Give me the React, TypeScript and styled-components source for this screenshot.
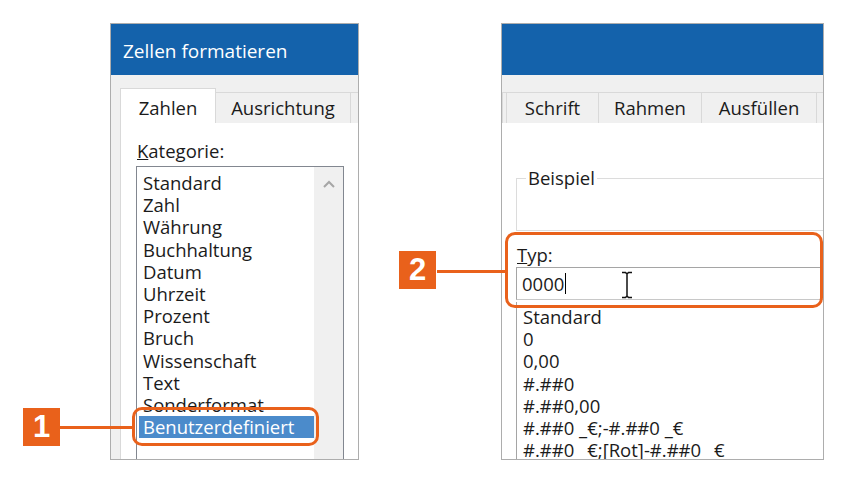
import styled, { createGlobalStyle } from "styled-components";

const GlobalStyle = createGlobalStyle`
  html, body {
    margin: 0;
    padding: 0;
    background: #ffffff;
  }
  body {
    font-family: "Open Sans", "Noto Sans", sans-serif;
    color: #1b1b1b;
  }
  * {
    box-sizing: border-box;
  }
`;

const ORANGE = "#e9611b";
const BLUE = "#1462ab";
const TEXT_SIZE = "18.5px";

const Page = styled.div`
    position: relative;
    width: 850px;
    height: 483px;
    display: flex;
    align-items: flex-start;
    gap: 142px;
    padding: 23px 0 0 110px;
    overflow: hidden;
`;

const Panel = styled.div<{ $w: number }>`
    width: ${(p) => p.$w}px;
    height: 437px;
    border: 1px solid #adadad;
    background: #f0f0f0;
    display: flex;
    flex-direction: column;
    overflow: hidden;
`;

const TitleBar = styled.div`
    height: 51px;
    flex: none;
    background: ${BLUE};
    color: #ffffff;
    font-size: 19px;
    display: flex;
    align-items: center;
    padding: 2px 0 0 12px;
`;

const TabRow = styled.div<{ $top: number; $left: number }>`
    height: 48px;
    flex: none;
    display: flex;
    align-items: flex-end;
    padding: ${(p) => p.$top}px 0 0 ${(p) => p.$left}px;
    white-space: nowrap;
`;

const Tab = styled.div<{ $w: number; $active?: boolean }>`
    width: ${(p) => p.$w}px;
    flex: none;
    height: ${(p) => (p.$active ? 35 : 31)}px;
    background: ${(p) => (p.$active ? "#ffffff" : "#f0f0f0")};
    border: 1px solid #d9d9d9;
    border-bottom: none;
    margin-right: -1px;
    font-size: ${TEXT_SIZE};
    line-height: 22px;
    display: flex;
    align-items: flex-end;
    justify-content: center;
    padding-bottom: 4px;
    overflow: hidden;
    position: relative;
    z-index: ${(p) => (p.$active ? 1 : 0)};
`;

const Content = styled.div<{ $inset: number; $pad: number }>`
    flex: 1;
    margin-left: ${(p) => p.$inset}px;
    margin-top: -1px;
    background: #ffffff;
    border-top: 1px solid #d9d9d9;
    border-left: ${(p) => (p.$inset ? "1px solid #d9d9d9" : "none")};
    padding-left: ${(p) => p.$pad}px;
    display: flex;
    flex-direction: column;
    overflow: hidden;
`;

const FieldLabel = styled.div<{ $mt: number }>`
    margin-top: ${(p) => p.$mt}px;
    font-size: ${TEXT_SIZE};
    line-height: 22px;
    height: 22px;
    flex: none;
    padding-left: 1px;
`;

const ListBox = styled.div<{ $w?: number }>`
    margin-top: 4px;
    width: ${(p) => (p.$w ? `${p.$w}px` : "auto")};
    flex: 1;
    border: 1px solid #828790;
    border-bottom: none;
    display: flex;
    overflow: hidden;
`;

const Items = styled.div`
    flex: 1;
    padding: 5px 0 0 2px;
    display: flex;
    flex-direction: column;
`;

const Item = styled.div<{ $selected?: boolean }>`
    font-size: ${TEXT_SIZE};
    line-height: 22.2px;
    height: 22.2px;
    flex: none;
    padding-left: 4px;
    white-space: nowrap;
    background: ${(p) => (p.$selected ? "#4b8bcb" : "transparent")};
    color: ${(p) => (p.$selected ? "#ffffff" : "#1b1b1b")};
`;

const ScrollBar = styled.div`
    width: 29px;
    flex: none;
    background: #f0f0f0;
    display: flex;
    justify-content: center;
    padding-top: 13px;
`;

const Beispiel = styled.fieldset`
    margin: 44px -40px 0 0;
    padding: 0;
    height: 64px;
    flex: none;
    border: 1px solid #dcdcdc;
    min-width: 0;
`;

const Legend = styled.legend`
    margin-left: 9px;
    padding: 0 2px;
    font-size: ${TEXT_SIZE};
    line-height: 22px;
`;

const TypeInput = styled.div`
    position: relative;
    margin: 1px -20px 0 0;
    height: 33px;
    flex: none;
    border: 1px solid #a5a5a5;
    border-bottom-color: #c8c8c8;
    display: flex;
    align-items: center;
    padding-left: 5px;
    font-size: ${TEXT_SIZE};
`;

const Caret = styled.span`
    display: inline-block;
    width: 1px;
    height: 21px;
    background: #000000;
    margin-left: 1px;
`;

const IBeam = styled.svg`
    position: absolute;
    left: 104px;
    top: 3px;
`;

const FormatList = styled.div`
    margin: 2px -20px 0 0;
    flex: 1;
    border-left: 1px solid #a5a5a5;
    padding: 4px 0 0 2px;
    display: flex;
    flex-direction: column;
`;

/* overlays: callout badges, leader lines, orange frames */
const Badge = styled.div<{ $x: number; $y: number }>`
    position: absolute;
    left: ${(p) => p.$x}px;
    top: ${(p) => p.$y}px;
    width: 37px;
    height: 38px;
    background: ${ORANGE};
    color: #ffffff;
    font-family: "Liberation Sans", Arial, sans-serif;
    font-weight: bold;
    font-size: 31px;
    display: flex;
    align-items: center;
    justify-content: center;
`;

const Leader = styled.div<{ $x: number; $y: number; $w: number }>`
    position: absolute;
    left: ${(p) => p.$x}px;
    top: ${(p) => p.$y}px;
    width: ${(p) => p.$w}px;
    height: 3px;
    background: ${ORANGE};
`;

const Frame = styled.div<{ $x: number; $y: number; $w: number; $h: number }>`
    position: absolute;
    left: ${(p) => p.$x}px;
    top: ${(p) => p.$y}px;
    width: ${(p) => p.$w}px;
    height: ${(p) => p.$h}px;
    border: 3px solid ${ORANGE};
    border-radius: 10px;
`;

const categories = [
    "Standard",
    "Zahl",
    "Währung",
    "Buchhaltung",
    "Datum",
    "Uhrzeit",
    "Prozent",
    "Bruch",
    "Wissenschaft",
    "Text",
    "Sonderformat",
];

const formats = [
    "Standard",
    "0",
    "0,00",
    "#.##0",
    "#.##0,00",
    "#.##0 _€;-#.##0 _€",
    "#.##0 _€;[Rot]-#.##0 _€",
];

export default function App() {
    return (
        <>
            <GlobalStyle />
            <Page>
                <Panel $w={249}>
                    <TitleBar>Zellen formatieren</TitleBar>
                    <TabRow $top={13} $left={9}>
                        <Tab $w={96} $active>Zahlen</Tab>
                        <Tab $w={136}>Ausrichtung</Tab>
                        <Tab $w={40} />
                    </TabRow>
                    <Content $inset={9} $pad={15}>
                        <FieldLabel $mt={17}>
                            <u>K</u>ategorie:
                        </FieldLabel>
                        <ListBox $w={208}>
                            <Items>
                                {categories.map((c) => (
                                    <Item key={c}>{c}</Item>
                                ))}
                                <Item $selected>Benutzerdefiniert</Item>
                            </Items>
                            <ScrollBar>
                                <svg width="12" height="8" viewBox="0 0 12 8">
                                    <polyline
                                        points="1,7 6,2 11,7"
                                        fill="none"
                                        stroke="#a6a6a6"
                                        strokeWidth="2"
                                    />
                                </svg>
                            </ScrollBar>
                        </ListBox>
                    </Content>
                </Panel>

                <Panel $w={323}>
                    <TitleBar />
                    <TabRow $top={17} $left={0}>
                        <Tab $w={5} />
                        <Tab $w={93}>Schrift</Tab>
                        <Tab $w={104}>Rahmen</Tab>
                        <Tab $w={116}>Ausfüllen</Tab>
                        <Tab $w={40} />
                    </TabRow>
                    <Content $inset={0} $pad={14}>
                        <Beispiel>
                            <Legend>Beispiel</Legend>
                        </Beispiel>
                        <FieldLabel $mt={13}>
                            <u>T</u>yp:
                        </FieldLabel>
                        <TypeInput>
                            0000<Caret />
                            <IBeam width="12" height="28" viewBox="0 0 12 28">
                                <path
                                    d="M1 1.5h3.5L6 3l1.5-1.5H11M6 3v22M1 26.5h3.5L6 25l1.5 1.5H11"
                                    fill="none"
                                    stroke="#111111"
                                    strokeWidth="1.5"
                                />
                            </IBeam>
                        </TypeInput>
                        <FormatList>
                            {formats.map((f) => (
                                <Item key={f}>{f}</Item>
                            ))}
                        </FormatList>
                    </Content>
                </Panel>

                <Frame $x={132} $y={407} $w={187} $h={39} />
                <Leader $x={60} $y={426} $w={73} />
                <Badge $x={23} $y={408}>1</Badge>

                <Frame $x={505} $y={232} $w={318} $h={76} />
                <Leader $x={437} $y={270} $w={69} />
                <Badge $x={399} $y={251}>2</Badge>
            </Page>
        </>
    );
}
